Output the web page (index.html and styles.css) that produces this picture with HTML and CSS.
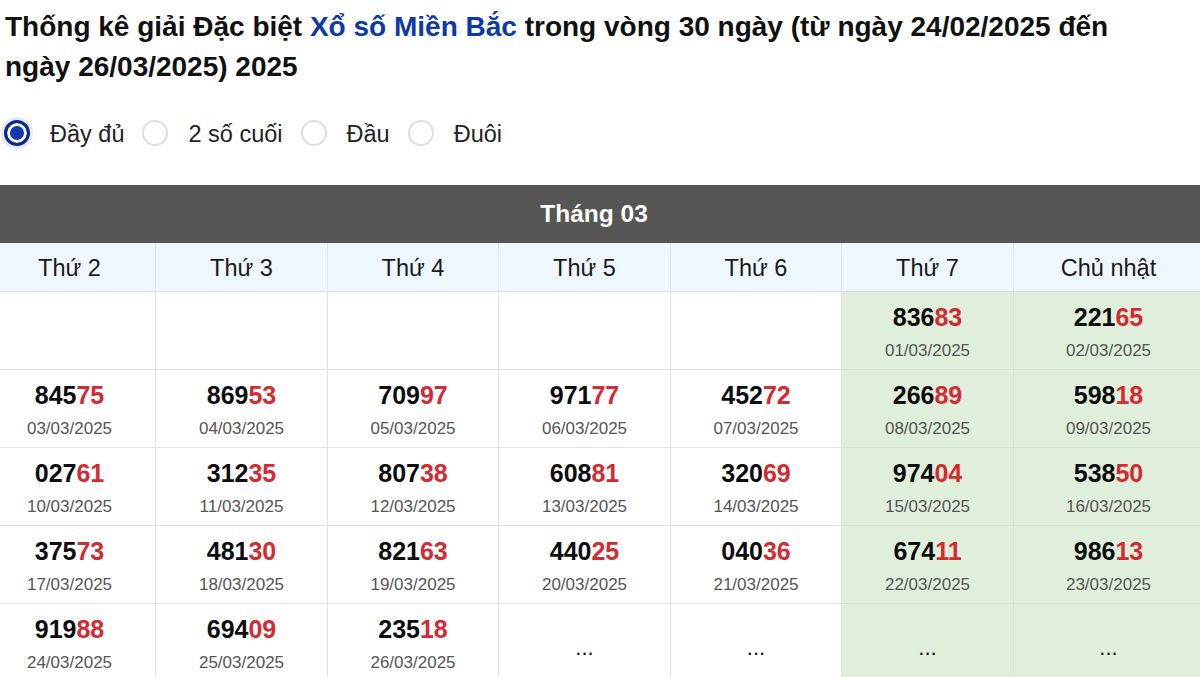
FILE: index.html
```html
<!DOCTYPE html>
<html lang="vi">
<head>
<meta charset="utf-8">
<link rel="stylesheet" href="styles.css">
</head>
<body>
<div class="page">
  <h1 class="title">Thống kê giải Đặc biệt <span class="hl">Xổ số Miền Bắc</span> trong vòng 30 ngày (từ ngày 24/02/2025 đến ngày 26/03/2025) 2025</h1>
  <div class="radios">
    <label class="opt"><span class="dot on"></span><span>Đầy đủ</span></label>
    <label class="opt"><span class="dot"></span><span>2 số cuối</span></label>
    <label class="opt"><span class="dot"></span><span>Đầu</span></label>
    <label class="opt"><span class="dot"></span><span>Đuôi</span></label>
  </div>
  <div class="cal">
    <div class="band">Tháng 03</div>
    <div class="hd">Thứ 2</div><div class="hd">Thứ 3</div><div class="hd">Thứ 4</div><div class="hd">Thứ 5</div><div class="hd">Thứ 6</div><div class="hd">Thứ 7</div><div class="hd">Chủ nhật</div>

    <div class="c"></div><div class="c"></div><div class="c"></div><div class="c"></div><div class="c"></div>
    <div class="c wk"><div class="n">836<b>83</b></div><div class="d">01/03/2025</div></div>
    <div class="c wk"><div class="n">221<b>65</b></div><div class="d">02/03/2025</div></div>

    <div class="c"><div class="n">845<b>75</b></div><div class="d">03/03/2025</div></div>
    <div class="c"><div class="n">869<b>53</b></div><div class="d">04/03/2025</div></div>
    <div class="c"><div class="n">709<b>97</b></div><div class="d">05/03/2025</div></div>
    <div class="c"><div class="n">971<b>77</b></div><div class="d">06/03/2025</div></div>
    <div class="c"><div class="n">452<b>72</b></div><div class="d">07/03/2025</div></div>
    <div class="c wk"><div class="n">266<b>89</b></div><div class="d">08/03/2025</div></div>
    <div class="c wk"><div class="n">598<b>18</b></div><div class="d">09/03/2025</div></div>

    <div class="c"><div class="n">027<b>61</b></div><div class="d">10/03/2025</div></div>
    <div class="c"><div class="n">312<b>35</b></div><div class="d">11/03/2025</div></div>
    <div class="c"><div class="n">807<b>38</b></div><div class="d">12/03/2025</div></div>
    <div class="c"><div class="n">608<b>81</b></div><div class="d">13/03/2025</div></div>
    <div class="c"><div class="n">320<b>69</b></div><div class="d">14/03/2025</div></div>
    <div class="c wk"><div class="n">974<b>04</b></div><div class="d">15/03/2025</div></div>
    <div class="c wk"><div class="n">538<b>50</b></div><div class="d">16/03/2025</div></div>

    <div class="c"><div class="n">375<b>73</b></div><div class="d">17/03/2025</div></div>
    <div class="c"><div class="n">481<b>30</b></div><div class="d">18/03/2025</div></div>
    <div class="c"><div class="n">821<b>63</b></div><div class="d">19/03/2025</div></div>
    <div class="c"><div class="n">440<b>25</b></div><div class="d">20/03/2025</div></div>
    <div class="c"><div class="n">040<b>36</b></div><div class="d">21/03/2025</div></div>
    <div class="c wk"><div class="n">674<b>11</b></div><div class="d">22/03/2025</div></div>
    <div class="c wk"><div class="n">986<b>13</b></div><div class="d">23/03/2025</div></div>

    <div class="c"><div class="n">919<b>88</b></div><div class="d">24/03/2025</div></div>
    <div class="c"><div class="n">694<b>09</b></div><div class="d">25/03/2025</div></div>
    <div class="c"><div class="n">235<b>18</b></div><div class="d">26/03/2025</div></div>
    <div class="c mid"><span class="dots">...</span></div>
    <div class="c mid"><span class="dots">...</span></div>
    <div class="c wk mid"><span class="dots">...</span></div>
    <div class="c wk mid"><span class="dots">...</span></div>
  </div>
</div>
</body>
</html>
```

FILE: styles.css
```css
html, body {
  margin: 0;
  padding: 0;
  background: #fff;
  overflow: hidden;
}
body {
  font-family: "Liberation Sans", Arial, sans-serif;
  color: #111;
}
.page {
  padding: 7px 0 0 4px;
}
.title {
  margin: 0;
  width: 1150px;
  font-size: 28px;
  line-height: 40px;
  font-weight: bold;
  color: #111;
  padding-left: 1px;
}
.hl {
  color: #0d3aa6;
}
.radios {
  display: flex;
  align-items: center;
  gap: 18px;
  margin-top: 31px;
  height: 30px;
}
.opt {
  display: flex;
  align-items: center;
  gap: 20px;
  font-size: 23.5px;
  line-height: 30px;
  padding-top: 2px;
  color: #222;
}
.dot {
  width: 26px;
  height: 26px;
  margin-top: -2px;
  box-sizing: border-box;
  border-radius: 50%;
  border: 2px solid #dedede;
  background: #fff;
}
.dot.on {
  border: 3px solid #0b2a8c;
  background: #1238b0;
  box-shadow: inset 0 0 0 3px #fff, 0 0 0 3px rgba(30, 80, 220, 0.12);
}
.cal {
  margin-top: 37px;
  margin-left: -20px;
  width: 1220px;
  display: grid;
  grid-template-columns: 172px 172px 171px 172px 171px 172px 190px;
}
.band {
  grid-column: 1 / -1;
  height: 58px;
  background: #565656;
  color: #fff;
  font-weight: bold;
  font-size: 24.5px;
  display: flex;
  align-items: center;
  justify-content: center;
}
.hd {
  height: 49px;
  box-sizing: border-box;
  background: #eef6fe;
  border-right: 1px solid #dde3ea;
  border-bottom: 1px solid #dde3ea;
  display: flex;
  align-items: center;
  justify-content: center;
  padding-top: 2px;
  font-size: 23.5px;
  color: #1a1a1a;
}
.c {
  height: 78px;
  box-sizing: border-box;
  border-right: 1px solid #e2e2e2;
  border-bottom: 1px solid #e2e2e2;
  display: flex;
  flex-direction: column;
  align-items: center;
  padding-top: 10px;
  background: #fff;
}
.c.wk {
  background: #e0efdb;
  border-color: #d7e4d3;
}
.n {
  font-size: 25px;
  font-weight: bold;
  line-height: 30px;
  color: #0d0d0d;
}
.n b {
  color: #d42a32;
}
.d {
  margin-top: 8px;
  font-size: 17px;
  line-height: 22px;
  color: #555;
}
.c.mid {
  padding-top: 0;
  justify-content: center;
  height: 78px;
}
.dots {
  font-size: 22px;
  line-height: 22px;
  color: #111;
  margin-top: 10px;
}
```
